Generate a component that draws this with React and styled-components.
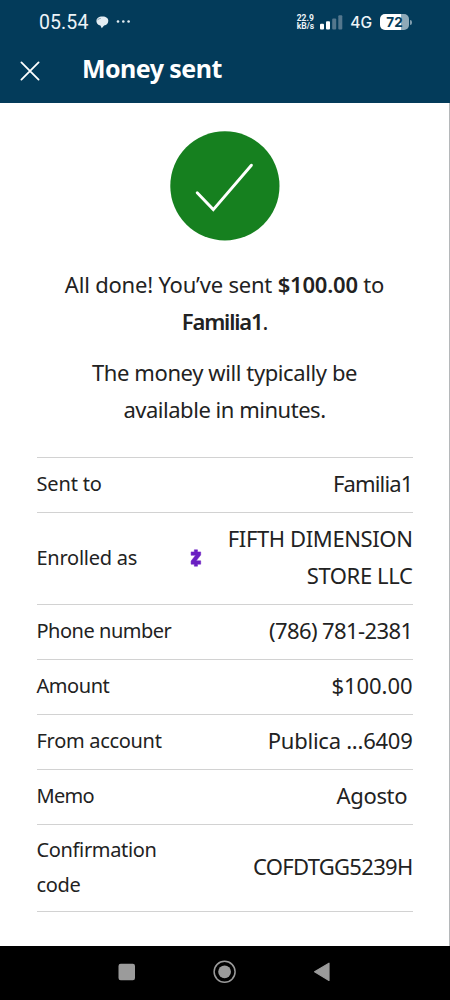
import React from "react";
import styled, { createGlobalStyle } from "styled-components";

const details = [
    { label: "Sent to", value: "Familia1", track: -0.85, labelTrack: -0.15 },
    { label: "Enrolled as", value: "FIFTH DIMENSION STORE LLC", zelle: true, track: -0.38, labelTrack: -0.25 },
    { label: "Phone number", value: "(786) 781-2381", track: -0.6, labelTrack: -0.48 },
    { label: "Amount", value: "$100.00", track: -0.05, labelTrack: -0.45 },
    { label: "From account", value: "Publica ...6409", track: -0.25, labelTrack: -0.3 },
    { label: "Memo", value: "Agosto\u00a0", track: -0.35, labelTrack: -0.7 },
    { label: "Confirmation code", value: "COFDTGG5239H", track: -0.7, labelTrack: -0.35 },
];

export default function App() {
    return (
        <Screen>
            <GlobalStyle />
            <Header>
                <StatusBar>
                    <Clock>05.54</Clock>
                    <ChatIcon />
                    <DotsIcon />
                    <StatusRight>
                        <NetSpeed>
                            <span>22.9</span>
                            <span>kB/s</span>
                        </NetSpeed>
                        <SignalIcon />
                        <Network>4G</Network>
                        <Battery>
                            <BatteryBody>72</BatteryBody>
                            <BatteryTip />
                        </Battery>
                    </StatusRight>
                </StatusBar>
                <TitleBar>
                    <CloseButton type="button" aria-label="Close">
                        <svg width="20" height="20" viewBox="0 0 20 20" fill="none" stroke="#fff" strokeWidth="1.8" strokeLinecap="round">
                            <path d="M1.4 1.4l17.2 17.2M18.6 1.4L1.4 18.6" />
                        </svg>
                    </CloseButton>
                    <Title>Money sent</Title>
                </TitleBar>
            </Header>
            <Content>
                <DoneIcon />
                <Message>
                    <Line $track={-0.2}>All done! You’ve sent <b>$100.00</b> to</Line>
                    <Line $track={-1.15}><b>Familia1</b>.</Line>
                </Message>
                <Message>
                    <Line $track={-0.4}>The money will typically be</Line>
                    <Line $track={-0.47}>available in minutes.</Line>
                </Message>
                <Details>
                    {details.map((item) => (
                        <Row key={item.label}>
                            <Label $track={item.labelTrack}>{item.label}</Label>
                            {item.zelle && <ZelleIcon />}
                            <Value $track={item.track}>{item.value}</Value>
                        </Row>
                    ))}
                </Details>
            </Content>
            <NavBar>
                <svg width="18" height="18" viewBox="0 0 18 18">
                    <rect x="0.5" y="0.7" width="16.5" height="16.5" rx="2.2" fill="#9b9b9b" />
                </svg>
                <svg width="24" height="24" viewBox="0 0 24 24">
                    <circle cx="11.6" cy="11.8" r="10.5" fill="none" stroke="#9b9b9b" strokeWidth="1.5" />
                    <circle cx="11.6" cy="11.8" r="6.4" fill="#9b9b9b" />
                </svg>
                <svg width="18" height="20" viewBox="0 0 18 20">
                    <path d="M16 1.2v17.2L1.6 9.8z" fill="#9b9b9b" stroke="#9b9b9b" strokeWidth="1.2" strokeLinejoin="round" />
                </svg>
            </NavBar>
        </Screen>
    );
}

function ChatIcon() {
    return (
        <svg width="13" height="13" viewBox="0 0 13 13">
            <path d="M6.2 0.5C9.8 0.3 12.3 2 12.3 4.8c0 2.6-1.6 4.2-4.2 4.8L5.8 12.2 4.4 9.6C2 9 0.4 7.2 0.4 4.9c0-2.6 2.4-4.3 5.8-4.4z" fill="#e4edf3" />
            <path d="M1 4.4c1-1.2 2.2-1.8 3.8-2" fill="none" stroke="#033b5a" strokeWidth="0.4" />
        </svg>
    );
}

function DotsIcon() {
    return (
        <svg width="15" height="4" viewBox="0 0 15 4" fill="#e4edf3">
            <circle cx="2" cy="1.5" r="1.3" />
            <circle cx="7.3" cy="1.5" r="1.3" />
            <circle cx="12.6" cy="1.5" r="1.3" />
        </svg>
    );
}

function SignalIcon() {
    return (
        <svg width="24" height="16" viewBox="0 0 24 16">
            <rect x="0" y="9.8" width="4" height="5.6" rx="1" fill="#fff" />
            <rect x="6" y="7.2" width="4" height="8.2" rx="1" fill="#fff" />
            <rect x="12.2" y="4.4" width="4" height="11" rx="1" fill="#54778d" />
            <rect x="18.3" y="1.2" width="4" height="14.2" rx="1" fill="#54778d" />
        </svg>
    );
}

function DoneIcon() {
    return (
        <svg width="110" height="110" viewBox="0 0 110 110">
            <circle cx="54.9" cy="54.9" r="54.6" fill="#16801f" />
            <path d="M27.2 61.8L43.3 78.6 81.4 34.2" fill="none" stroke="#fff" strokeWidth="2.9" strokeLinecap="round" strokeLinejoin="miter" />
        </svg>
    );
}

function ZelleIcon() {
    return (
        <svg width="12" height="20" viewBox="0 0 12 20" fill="#6a1fc2">
            <path d="M4.3 1.8h3.2v2.1h3.2v3.2L6.2 12.8h4.5v3.4H7.5v2H4.3v-2H1.1v-3.2L5.6 7.3H1.1V3.9h3.2z" stroke="#6a1fc2" strokeWidth="0.5" strokeLinejoin="round" />
        </svg>
    );
}

const GlobalStyle = createGlobalStyle`
    * {
        box-sizing: border-box;
    }
    body {
        margin: 0;
        background: #fff;
        font-family: "Noto Sans", "Open Sans", sans-serif;
        color: #222;
    }
    svg {
        display: block;
        flex-shrink: 0;
    }
`;

const Screen = styled.div`
    width: 450px;
    height: 1000px;
    display: flex;
    flex-direction: column;
    overflow: hidden;
`;

const Header = styled.header`
    height: 103px;
    background-color: #033b5a;
    color: #fff;
`;

const StatusBar = styled.div`
    height: 44px;
    display: flex;
    align-items: center;
    padding: 0 38px 0 39px;
    font-family: Roboto, sans-serif;
    color: #edf4f8;
`;

const Clock = styled.span`
    width: 57px;
    padding-top: 1px;
    font-size: 19.5px;
    font-weight: 400;
    line-height: 24px;
    letter-spacing: 0.1px;

    & + svg + svg {
        margin-left: 7px;
    }
`;

const StatusRight = styled.div`
    display: flex;
    align-items: center;
    margin-left: auto;
`;

const NetSpeed = styled.div`
    display: flex;
    flex-direction: column;
    margin-right: 6px;
    font-size: 8.5px;
    font-weight: 700;
    line-height: 8px;
`;

const Network = styled.span`
    margin: 0 8px 0 6px;
    font-family: Inter, sans-serif;
    font-size: 15.5px;
    font-weight: 500;
`;

const Battery = styled.div`
    display: flex;
    align-items: center;
    gap: 1px;
`;

const BatteryBody = styled.div`
    width: 29px;
    height: 16px;
    border-radius: 5px;
    background: linear-gradient(to right, #fff 72%, #8fa9b8 72%);
    color: #033b5a;
    font-family: Inter, sans-serif;
    font-size: 13.5px;
    font-weight: 700;
    line-height: 16px;
    text-align: center;
`;

const BatteryTip = styled.div`
    width: 2px;
    height: 5px;
    border-radius: 0 2px 2px 0;
    background-color: #7f9cad;
`;

const TitleBar = styled.div`
    height: 50px;
    display: flex;
    align-items: center;
    padding-left: 20px;
`;

const CloseButton = styled.button`
    margin: 4px 42px 0 0;
    padding: 0;
    border: 0;
    background: none;
`;

const Title = styled.h1`
    margin: 0 0 2px;
    font-size: 25px;
    font-weight: 700;
    line-height: 34px;
    letter-spacing: -0.55px;
`;

const Content = styled.main`
    flex: 1;
    display: flex;
    flex-direction: column;
    align-items: center;
    padding: 28px 37px 0;
    border-right: 1px solid #b5b8ba;
`;

const Message = styled.div`
    margin-top: 13px;
    text-align: center;

    svg + & {
        margin-top: 25px;
    }
`;

const Line = styled.p`
    margin: 0;
    font-size: 22px;
    line-height: 37.3px;
    letter-spacing: ${(props) => props.$track}px;
    white-space: nowrap;

    b {
        font-weight: 600;
    }
`;

const Details = styled.div`
    width: 376px;
    margin-top: 29px;
    border-top: 1px solid #d2d2d2;
`;

const Row = styled.div`
    display: flex;
    align-items: center;
    justify-content: space-between;
    padding: 8px 0 9px;
    border-bottom: 1px solid #d2d2d2;
`;

const Label = styled.div`
    width: 153px;
    font-size: 20px;
    line-height: 34.5px;
    letter-spacing: ${(props) => props.$track}px;
`;

const Value = styled.div`
    width: 210px;
    margin: -1px 0 1px;
    font-size: 22px;
    line-height: 37px;
    letter-spacing: ${(props) => props.$track}px;
    text-align: right;
`;

const NavBar = styled.nav`
    height: 54px;
    display: flex;
    align-items: center;
    justify-content: space-between;
    padding: 0 119px 2px 118px;
    background-color: #000;
`;
